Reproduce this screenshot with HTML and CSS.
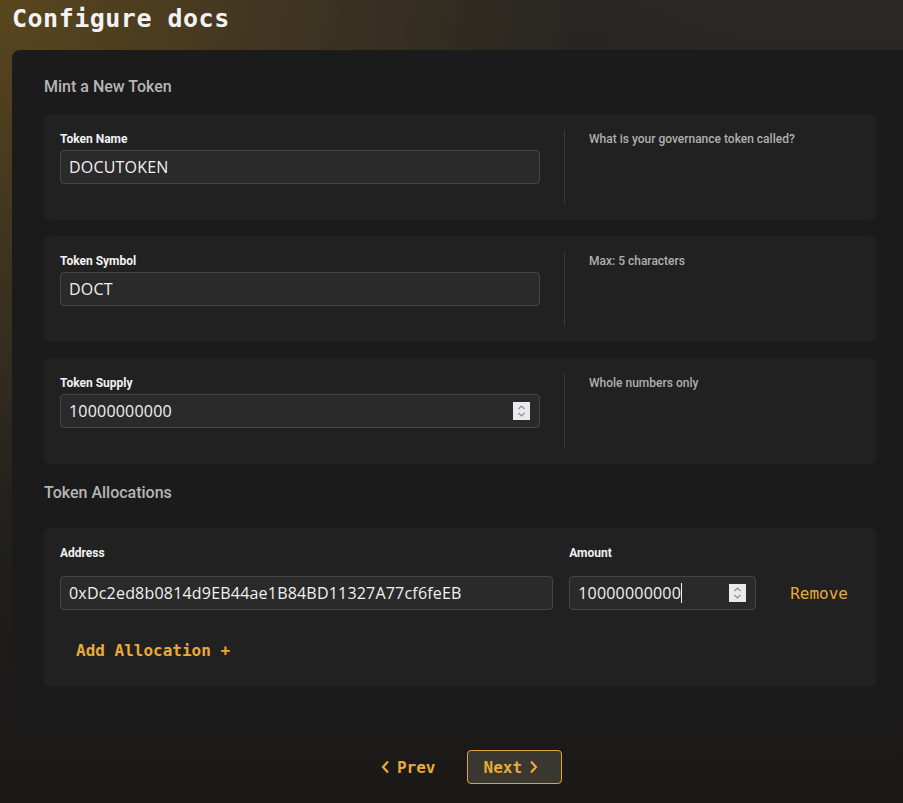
FILE: index.html
```html
<!DOCTYPE html>
<html lang="en">
<head>
<meta charset="utf-8">
<title>Configure docs</title>
<link rel="stylesheet" href="styles.css">
</head>
<body>
<h1 class="title">Configure docs</h1>
<main class="card">
  <h2 class="section-title">Mint a New Token</h2>

  <section class="panel field-row">
    <div class="field">
      <label class="label">Token Name</label>
      <div class="input"><span class="value">DOCUTOKEN</span></div>
    </div>
    <p class="help">What is your governance token called?</p>
  </section>

  <section class="panel field-row">
    <div class="field">
      <label class="label">Token Symbol</label>
      <div class="input"><span class="value">DOCT</span></div>
    </div>
    <p class="help">Max: 5 characters</p>
  </section>

  <section class="panel field-row">
    <div class="field">
      <label class="label">Token Supply</label>
      <div class="input">
        <span class="value">10000000000</span>
        <span class="spinner"><svg width="17" height="18" viewBox="0 0 17 18"><path d="M5.5 7 L8.5 4 L11.5 7" fill="none" stroke="#8d8d93" stroke-width="1.2"/><path d="M5.5 11 L8.5 14 L11.5 11" fill="none" stroke="#8d8d93" stroke-width="1.2"/></svg></span>
      </div>
    </div>
    <p class="help">Whole numbers only</p>
  </section>

  <h2 class="section-title alloc-title">Token Allocations</h2>

  <section class="panel alloc">
    <div class="alloc-grid">
      <label class="label alloc-label">Address</label>
      <label class="label alloc-label">Amount</label>
      <span></span>
      <div class="input"><span class="value">0xDc2ed8b0814d9EB44ae1B84BD11327A77cf6feEB</span></div>
      <div class="input">
        <span class="value">10000000000</span><span class="caret"></span>
        <span class="spinner"><svg width="17" height="18" viewBox="0 0 17 18"><path d="M5.5 7 L8.5 4 L11.5 7" fill="none" stroke="#8d8d93" stroke-width="1.2"/><path d="M5.5 11 L8.5 14 L11.5 11" fill="none" stroke="#8d8d93" stroke-width="1.2"/></svg></span>
      </div>
      <button class="link-btn remove" type="button">Remove</button>
    </div>
    <button class="link-btn add" type="button">Add Allocation +</button>
  </section>
</main>

<nav class="pager">
  <button class="pager-btn prev" type="button"><svg width="16" height="16" viewBox="0 0 16 16"><path d="M11 2.5 L6 8 L11 13.5" fill="none" stroke="currentColor" stroke-width="2.2"/></svg><span>Prev</span></button>
  <button class="pager-btn next" type="button"><span>Next</span><svg width="16" height="16" viewBox="0 0 16 16"><path d="M5 2.5 L10 8 L5 13.5" fill="none" stroke="currentColor" stroke-width="2.2"/></svg></button>
</nav>
</body>
</html>
```

FILE: styles.css
```css
html {
  background: #1b1917;
  overflow: hidden;
}

body {
  margin: 0;
  min-height: 803px;
  padding: 0 0 0 12px;
  box-sizing: border-box;
  font-family: Roboto, "Noto Sans", sans-serif;
  color: #f0f0f0;
  background:
    radial-gradient(ellipse 760px 680px at 0 0, rgba(92, 72, 30, 0.95) 0%, rgba(66, 54, 32, 0.8) 40%, rgba(40, 37, 32, 0.4) 75%, rgba(27, 25, 23, 0) 100%),
    linear-gradient(180deg, #292824 0%, #201e1b 60%, #1b1917 100%);
}

.title {
  margin: 0 0 12px;
  font-family: "DejaVu Sans Mono", "Liberation Mono", monospace;
  font-weight: 700;
  font-size: 25px;
  line-height: 38px;
  color: #f3f3f3;
  letter-spacing: 0.5px;
}

.card {
  width: 896px;
  box-sizing: border-box;
  background: #1c1b1c;
  border-radius: 8px;
  padding: 25px 32px 36px;
}

.section-title {
  margin: 0 0 15px;
  font-size: 16px;
  font-weight: 500;
  line-height: 24px;
  color: #b6b6b6;
}

.alloc-title {
  margin: 17px 0 23px;
}

.panel {
  background: #212121;
  border-radius: 6px;
  padding: 16px;
  margin-bottom: 16px;
}

.field-row {
  display: grid;
  grid-template-columns: 480px 1fr;
  column-gap: 24px;
  min-height: 74px;
}

.field {
  display: flex;
  flex-direction: column;
}

.label {
  display: block;
  font-size: 12px;
  font-weight: 700;
  line-height: 18px;
  color: #f2f2f2;
  margin-bottom: 2px;
}

.input {
  display: flex;
  align-items: center;
  height: 34px;
  box-sizing: border-box;
  background: #2a2a2a;
  border: 1px solid #454545;
  border-radius: 4px;
  padding: 0 9px 0 8px;
}

.value {
  font-family: "Open Sans", Roboto, sans-serif;
  font-size: 16px;
  letter-spacing: 0.2px;
  color: #f1f1f1;
  white-space: nowrap;
}

.caret {
  width: 1px;
  height: 20px;
  background: #f1f1f1;
}

.spinner {
  display: flex;
  margin-left: auto;
  width: 17px;
  height: 18px;
  background: #e9e9ee;
}

.help {
  margin: 0;
  border-left: 1px solid #3a3a3a;
  padding-left: 24px;
  font-size: 12px;
  font-weight: 500;
  line-height: 18px;
  color: #b0b0b0;
}

.alloc {
  margin-bottom: 0;
  padding-bottom: 19px;
}

.alloc-grid {
  display: grid;
  grid-template-columns: 1fr 187px auto;
  column-gap: 16px;
  align-items: center;
}

.alloc-label {
  margin-bottom: 13px;
}

.link-btn {
  background: none;
  border: none;
  height: 36px;
  font-family: "DejaVu Sans Mono", "Liberation Mono", monospace;
  font-size: 16px;
  color: #e9aa38;
  cursor: pointer;
}

.remove {
  padding: 0 12px 0 18px;
  font-weight: 400;
}

.add {
  display: block;
  margin-top: 21px;
  padding: 0 16px;
  font-weight: 700;
}

.pager {
  width: 896px;
  display: flex;
  justify-content: center;
  gap: 12px;
  margin-top: 27px;
}

.pager-btn {
  display: flex;
  align-items: center;
  gap: 4px;
  height: 34px;
  box-sizing: border-box;
  border: 1px solid transparent;
  border-radius: 4px;
  background: none;
  font-family: "DejaVu Sans Mono", "Liberation Mono", monospace;
  font-weight: 700;
  font-size: 16px;
  color: #e9aa38;
  cursor: pointer;
}

.prev {
  padding: 0 18px 0 18px;
}

.next {
  padding: 0 19px 0 16px;
  background: #3a3630;
  border-color: #e0a735;
}
```
